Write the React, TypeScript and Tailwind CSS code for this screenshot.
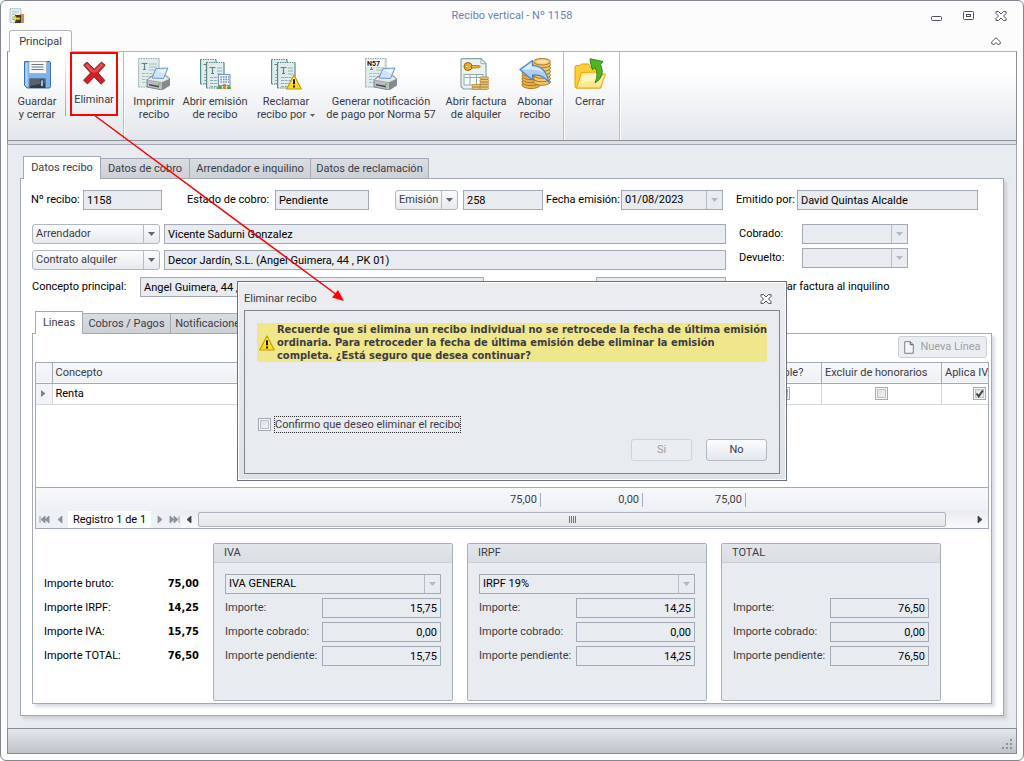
import React from "react";

type Option = { label: string; width: string };

function Caret({ className = "fill-[#5f6672]" }: { className?: string }) {
  return (
    <svg viewBox="0 0 7 4" className={`h-1 w-[7px] ${className}`} aria-hidden="true">
      <path d="M0 0h7L3.5 4z" />
    </svg>
  );
}

function TextField({
  label,
  value,
  labelWidth = "",
  width = "",
  muted = false,
  hiddenLabel = false,
  right = false,
}: {
  label: string;
  value: string;
  labelWidth?: string;
  width?: string;
  muted?: boolean;
  hiddenLabel?: boolean;
  right?: boolean;
}) {
  const id = React.useId();
  return (
    <>
      {!hiddenLabel && (
        <label htmlFor={id} className={`shrink-0 whitespace-nowrap ${labelWidth} ${muted ? "text-[#3b3b45]" : ""}`}>
          {label}
        </label>
      )}
      <input
        id={id}
        aria-label={hiddenLabel ? label : undefined}
        readOnly
        defaultValue={value}
        className={`h-5 min-w-0 border border-[#a3aab6] bg-[#e8ebf0] px-[3px] outline-none ${width} ${right ? "text-right" : ""}`}
      />
    </>
  );
}

function Combo({
  label,
  value,
  labelWidth = "",
  width = "",
  hiddenLabel = false,
}: {
  label: string;
  value: string;
  labelWidth?: string;
  width?: string;
  hiddenLabel?: boolean;
}) {
  const id = React.useId();
  return (
    <>
      {!hiddenLabel && (
        <label htmlFor={id} className={`shrink-0 whitespace-nowrap ${labelWidth}`}>
          {label}
        </label>
      )}
      <div className={`relative shrink-0 ${width}`}>
        <select
          id={id}
          aria-label={hiddenLabel ? label : undefined}
          disabled
          className="block h-5 w-full appearance-none border border-[#a3aab6] bg-[#e8ebf0] pr-5 pl-[3px] text-black opacity-100"
        >
          <option>{value}</option>
        </select>
        <span className="pointer-events-none absolute top-px right-px bottom-px flex w-4 items-center justify-center border-l border-[#b6bbc5]">
          <Caret className="fill-[#b3b8c0]" />
        </span>
      </div>
    </>
  );
}

function DropButton({ value, width }: { value: string; width: string }) {
  return (
    <div className={`relative shrink-0 ${width}`}>
      <select
        aria-label={value}
        className="block h-5 w-full appearance-none rounded-[3px] border border-[#b2b7c0] bg-linear-to-b from-[#fbfcfd] to-[#e6e9ee] pr-4 pl-[3px] text-[#3b3b45]"
      >
        <option>{value}</option>
      </select>
      <span className="pointer-events-none absolute top-px right-px bottom-px flex w-4 items-center justify-center border-l border-[#b6bbc5]">
        <Caret />
      </span>
    </div>
  );
}

function Check({ label, checked = false, id }: { label?: string; checked?: boolean; id?: string }) {
  return (
    <span className="relative inline-block size-[13px] shrink-0 align-top">
      <input
        type="checkbox"
        id={id}
        aria-label={label}
        defaultChecked={checked}
        className="peer block size-[13px] appearance-none border border-[#a3aab6] bg-linear-to-br from-[#dcdcdc] to-[#f6f6f6] shadow-[inset_0_0_0_1px_#f6f7f9,inset_0_0_0_2px_#bdbfc4]"
      />
      <svg
        viewBox="0 0 13 13"
        className="pointer-events-none absolute inset-0 hidden size-[13px] peer-checked:block"
        aria-hidden="true"
      >
        <path d="M3.500 6.500l2.200 2.800L9.800 3.500" fill="none" stroke="#3b3b3f" strokeWidth="1.900" />
      </svg>
    </span>
  );
}

function Tabs({ items }: { items: Option[] }) {
  return (
    <div role="tablist" className="relative z-10 -mb-px flex items-end">
      {items.map((t, i) =>
        i === 0 ? (
          <button
            key={t.label}
            role="tab"
            aria-selected
            className={`h-[23px] border border-b-0 border-[#a3aab6] bg-white text-[#3b3b45] ${t.width}`}
          >
            {t.label}
          </button>
        ) : (
          <button
            key={t.label}
            role="tab"
            className={`h-[21px] border border-l-0 border-[#a3aab6] bg-linear-to-b from-[#d9dce0] to-[#cdd1d6] whitespace-nowrap text-[#3b3b45] ${t.width}`}
          >
            {t.label}
          </button>
        ),
      )}
    </div>
  );
}

/* Ribbon icons, all drawn on a 32 x 32 grid */

function Sheet({ x = 0, y = 0, w = 21, h = 29, dark = false }: { x?: number; y?: number; w?: number; h?: number; dark?: boolean }) {
  const edge = dark ? "#4f8583" : "#8fa9a8";
  const line = dark ? "#86b3b0" : "#a3bdbb";
  return (
    <g transform={`translate(${x} ${y})`}>
      <rect x="0.5" y="0.5" width={w} height={h} fill="#e0eceb" />
      <path d={`M.5 .5H${w}M.5 ${h}H${w}`} stroke={edge} strokeWidth="1.2" strokeDasharray="1.4 1" />
      <path d={`M.6 .5V${h}M${w} .5V${h}`} stroke={edge} strokeWidth={dark ? 1.1 : 0.7} />
      <path d="M3.500 5.500h6M6.500 5.500v6M5 11.500h3" stroke="#5f8684" strokeWidth="1.2" />
      <path d={`M11 6H${w - 2}M11 9H${w - 2}M11 12H${w - 2}`} stroke={line} strokeWidth="1.200" />
      <path
        d={`M4 15.500H${w - 2}M4 18.500H${w - 2}M4 21.500H${w - 2}M4 24.500H${w - 2}`}
        stroke={line}
        strokeWidth="1.200"
        strokeDasharray="3 0.700"
      />
    </g>
  );
}

function Printer() {
  return (
    <g>
      <path d="M9 22l6-5h12l5 4v6l-8 5-15-3z" fill="#b9bdc2" stroke="#6d7278" strokeWidth="0.8" />
      <path d="M9 22l15 2.500 8-3.500-5-3.500H15z" fill="#e6e8ea" stroke="#8b9096" strokeWidth="0.6" />
      <path d="M18 10.500l12-.5-4.500 10.500L14 20z" fill="#cfe4fb" stroke="#5f8fd0" strokeWidth="0.9" />
      <path d="M19 12l9-.4-2 4z" fill="#f4f9ff" />
      <path d="M24 24.500l8-3.500v6l-8 5z" fill="#85898f" />
      <path d="M11 26l10 1.800v1.800l-10-2z" fill="#4d5157" />
      <rect x="20" y="25.500" width="2.200" height="1.500" fill="#5ad13a" />
    </g>
  );
}

function Warning() {
  return (
    <g transform="translate(16 16)">
      <path d="M8 1L15.300 15H.7z" fill="#ffd91f" stroke="#c39a08" strokeWidth="1.200" strokeLinejoin="round" />
      <path d="M8 2.800L11 9H5z" fill="#fff07a" />
      <path d="M8 5.200v5M8 11.500v2" stroke="#111" strokeWidth="1.900" />
    </g>
  );
}

function SaveIcon() {
  return (
    <svg viewBox="0 0 32 32" className="size-8" aria-hidden="true">
      <path d="M3.500 3.500h24.500q1.500 0 1.500 1.500v23.500q0 1.500-1.500 1.500H6l-2.500-2.500z" fill="#7fb2ea" stroke="#3c6fae" />
      <path d="M4.500 5v22l2 2V5z" fill="#b5d6f7" />
      <rect x="8" y="3.500" width="17.500" height="12" fill="#f6f7f9" stroke="#8aa4c4" strokeWidth="0.600" />
      <path d="M10.500 6.500h12M10.500 9h12M10.500 11.500h12" stroke="#70757c" />
      <rect x="8.500" y="20.500" width="16" height="9.500" fill="#353a42" />
      <path d="M9 21h15v4L9 28z" fill="#5a616b" />
      <rect x="19.500" y="22" width="3" height="6.500" fill="#8fbcf0" stroke="#20242b" strokeWidth="0.600" />
    </svg>
  );
}

function DeleteIcon() {
  return (
    <svg viewBox="0 0 32 32" className="size-8" aria-hidden="true">
      <path
        d="M5.500 8L9 5l7.200 7.200L23.500 5l3.700 3.200L20 16l7 7.500-4 3.700-6.800-7.200L9.500 27l-4-3.700 7-7.300z"
        fill="#cf1f27"
        stroke="#94191c"
        strokeWidth="0.900"
        strokeLinejoin="round"
      />
      <path d="M6.800 8.200L9 6.200l7.200 7.500 7.200-7.500 2.500 2.100-6.800 6.500q-3.200 1.200-6.200 0z" fill="#e8645f" opacity="0.700" />
    </svg>
  );
}

function PrintIcon() {
  return (
    <svg viewBox="0 0 32 32" className="size-8" aria-hidden="true">
      <Sheet />
      <Printer />
    </svg>
  );
}

function EmissionIcon() {
  return (
    <svg viewBox="0 0 32 32" className="size-8" aria-hidden="true">
      <Sheet x={1} y={1} w={16} h={25} dark />
      <Sheet x={7} y={4} w={18} h={26} dark />
      <rect x="19.500" y="16.500" width="11.500" height="11" fill="#e8f0fb" stroke="#7a94bd" />
      <path d="M21.500 19h8.500M21.500 21.500h8.500M21.500 24h8.500" stroke="#6f8dbd" strokeWidth="1.500" strokeDasharray="1.500 1" />
      <rect x="24" y="26" width="3" height="5" fill="#e08030" />
      <path d="M18 31q1-4 3.500-3 1 .5 1.500 3zM27.500 31q.5-3 2.500-3t2 3z" fill="#5a9e34" />
    </svg>
  );
}

function ClaimIcon() {
  return (
    <svg viewBox="0 0 32 32" className="size-8" aria-hidden="true">
      <Sheet x={1} y={1} w={16} h={25} dark />
      <Sheet x={7} y={4} w={18} h={26} dark />
      <Warning />
    </svg>
  );
}

function NormIcon() {
  return (
    <svg viewBox="0 0 32 32" className="size-8" aria-hidden="true">
      <Sheet />
      <rect x="1" y="2" width="18" height="7" fill="#fbfdfd" />
      <text x="2" y="8" fontSize="7" fontWeight="700" fill="#111">
        N57
      </text>
      <Printer />
    </svg>
  );
}

function InvoiceIcon() {
  return (
    <svg viewBox="0 0 32 32" className="size-8" aria-hidden="true">
      <path d="M2 .7h19l5 5V31H3.500L1 28.500V2z" fill="#e9f1f1" stroke="#8aa3a5" strokeWidth="1.200" />
      <path d="M21 .7v5h5z" fill="#fff" stroke="#8aa3a5" strokeWidth="0.900" />
      <rect x="4" y="16.500" width="19" height="10.500" fill="#f8fbfb" stroke="#93adaf" />
      <path d="M4 19.500h19M10 16.500V27M16.500 16.500V27" stroke="#93adaf" />
      <circle cx="8" cy="8.500" r="4" fill="#f0b429" stroke="#94630a" />
      <circle cx="6.800" cy="8.500" r="1.300" fill="#fff" stroke="#94630a" strokeWidth="0.600" />
      <path d="M11.500 7.500h7.500l1.500 1.200-2 1.300-1.500-.8-1.200 1.300-1.300-1-1.500.8h-1.500z" fill="#f0b429" stroke="#94630a" strokeWidth="0.700" />
      {[29, 26.5, 24, 21.5, 19].map((y) => (
        <rect key={y} x="20" y={y} width="8.500" height="2.300" rx="1" fill="#efc873" stroke="#a9782a" strokeWidth="0.700" />
      ))}
      {[29, 26.5].map((y) => (
        <rect key={y} x="12" y={y} width="8" height="2.300" rx="1" fill="#efc873" stroke="#a9782a" strokeWidth="0.700" />
      ))}
    </svg>
  );
}

function RefundIcon() {
  return (
    <svg viewBox="0 0 32 32" className="size-8" aria-hidden="true">
      {[27, 24, 21, 18, 15].map((y) => (
        <ellipse key={y} cx="12" cy={y} rx="9" ry="3.600" fill="#eab04a" stroke="#9a6414" strokeWidth="0.800" />
      ))}
      {[24, 20.5, 17, 13.5, 10, 6.5, 3.7].map((y) => (
        <ellipse key={y} cx="23" cy={y} rx="8.500" ry="3.300" fill="#f3c566" stroke="#9a6414" strokeWidth="0.800" />
      ))}
      <ellipse cx="23" cy="3.700" rx="5.500" ry="1.800" fill="#fbe3a4" />
      <path
        d="M.8 11.500L13.500 2.500v5q13 0 16.500 17-6-8.500-16.500-7.500v5z"
        fill="#a9d0f7"
        stroke="#4b82c4"
        strokeWidth="1.100"
        strokeLinejoin="round"
      />
      <path d="M3 11.500l9.500-6.700v4q8 .2 12.500 6-5.500-3.500-12.500-3.300z" fill="#dcedfd" />
    </svg>
  );
}

function CloseFolderIcon() {
  return (
    <svg viewBox="0 0 32 32" className="size-8" aria-hidden="true">
      <path d="M1 9q0-1.500 1.500-1.500h3L7.500 6h7l2 3.500H27V30H2.500Q1 30 1 28.500z" fill="#ffcf3a" stroke="#e39a0c" />
      <path d="M7.500 14.500l14-.5 3 2.500 7-.5-5 13.500q-.3.500-1 .5H2.500z" fill="#ffe98a" stroke="#e9a515" />
      <path d="M9 16.500l12-.5 3 2.500 5-.2-1.500 4q-10 0-20.500 3z" fill="#fff5bf" />
      <path
        d="M16.500 5L16 .8l13 2.700-2.500 3q5.500 12-5.500 18.500 4-9 0-15.500l-2.500 2.500z"
        fill="#4fb81e"
        stroke="#2a7a10"
        strokeWidth="0.900"
      />
    </svg>
  );
}

function RibbonButton({
  lines,
  icon,
  width,
  caret = false,
  ring = false,
}: {
  lines: string[];
  icon: React.ReactNode;
  width: string;
  caret?: boolean;
  ring?: boolean;
}) {
  return (
    <button
      className={`flex shrink-0 flex-col items-center leading-[13px] text-[#3b3b45] ${width} ${
        ring ? "h-16 gap-1 border-2 border-[#fb0207] pt-[3px]" : "h-20 gap-[5px] pt-1.5"
      }`}
    >
      {icon}
      <span className="whitespace-nowrap">
        {lines.map((l, i) => (
          <span key={l} className="block">
            {l}
            {caret && i === lines.length - 1 && (
              <svg viewBox="0 0 5 3" className="ml-1 inline h-[3px] w-[5px] fill-[#5f6672] align-middle" aria-hidden="true">
                <path d="M0 0h5L2.500 3z" />
              </svg>
            )}
          </span>
        ))}
      </span>
    </button>
  );
}

function GroupSeparator() {
  return <div className="w-0.5 self-stretch border-l border-[#b9bcc3] bg-white" />;
}

function CrossIcon() {
  return (
    <svg viewBox="0 0 12 10" className="h-2.5 w-3" aria-hidden="true">
      <path
        d="M1 .6h2.600L6 3 8.400.6H11v1.900L8.500 5 11 7.500v1.900H8.400L6 7 3.600 9.400H1V7.500L3.500 5 1 2.500z"
        fill="#fff"
        stroke="#4a4f59"
      />
    </svg>
  );
}

function Group({
  title,
  combo,
  values,
  width,
  inputWidth,
}: {
  title: string;
  combo?: string;
  values: string[];
  width: string;
  inputWidth: string;
}) {
  const labels = ["Importe:", "Importe cobrado:", "Importe pendiente:"];
  return (
    <section className={`h-[158px] shrink-0 rounded-[2px] border border-[#a9afba] bg-[#e8ebf0] ${width}`}>
      <h3 className="flex h-[19px] items-center border-b border-[#c9ced5] bg-linear-to-b from-[#e2e5e9] to-[#dadee3] pl-2.5 text-[#3b3b45]">
        {title}
      </h3>
      <div className="flex flex-col gap-1 px-[11px] pt-[11px]">
        <div className="flex h-5">{combo && <Combo label={title} hiddenLabel value={combo} width="w-full" />}</div>
        {labels.map((l, i) => (
          <div key={l} className="flex items-center justify-between">
            <TextField label={l} value={values[i]} width={inputWidth} muted right />
          </div>
        ))}
      </div>
    </section>
  );
}

const navPaths = {
  first: "M1 1v7M6 1v7L2 4.500zM10 1v7L6 4.500z",
  prev: "M7 1v7L3 4.500z",
  next: "M4 1v7l4-3.500z",
  last: "M1 1v7l4-3.500zM5 1v7l4-3.500zM10 1v7",
};

function NavButton({ label, d, dark = false, width }: { label: string; d: string; dark?: boolean; width: string }) {
  return (
    <button aria-label={label} className={`flex h-full shrink-0 items-center justify-center ${width}`}>
      <svg
        viewBox="0 0 11 9"
        className={`h-[9px] w-[11px] ${dark ? "fill-[#3d4149] stroke-[#3d4149]" : "fill-[#8b919b] stroke-[#8b919b]"}`}
        strokeWidth="0.8"
        aria-hidden="true"
      >
        <path d={d} />
      </svg>
    </button>
  );
}

function Dialog() {
  return (
    <div
      role="dialog"
      aria-labelledby="dialog-title"
      className="absolute top-[280px] left-[236px] z-20 w-[550px] border border-[#6b707a] bg-linear-to-b from-[#ebedf0] to-[#e0e3e6] px-1.5 pb-1.5 text-[#3b3b45] shadow-[inset_0_0_0_1px_#fff]"
    >
      <div className="flex h-7 items-center justify-between pt-1.5 pr-2">
        <h2 id="dialog-title">Eliminar recibo</h2>
        <button aria-label="Cerrar">
          <CrossIcon />
        </button>
      </div>
      <div className="flex h-[164px] flex-col justify-between border border-[#7f848d] bg-[#e8ebf0] px-3 pt-3 pb-3">
        <div className="flex items-center bg-[#f0e68c] font-['DejaVu_Sans_Condensed','DejaVu_Sans',sans-serif] leading-[13px] font-bold">
          <svg viewBox="16 16 16 16" className="ml-0.5 size-4 shrink-0" aria-hidden="true">
            <Warning />
          </svg>
          <p className="pl-0.5 whitespace-nowrap">
            Recuerde que si elimina un recibo individual no se retrocede la fecha de última emisión
            <br />
            ordinaria. Para retroceder la fecha de última emisión debe eliminar la emisión
            <br />
            completa. ¿Está seguro que desea continuar?
          </p>
        </div>
        <div>
          <div className="flex items-center gap-[3px] pl-px">
            <Check id="confirm" />
            <label htmlFor="confirm" className="h-[17px] border border-dotted border-[#2b2b2b] leading-[15px]">
              Confirmo que deseo eliminar el recibo
            </label>
          </div>
          <div className="mt-1.5 flex justify-end gap-3.5">
            <button
              disabled
              className="h-[22px] w-[61px] rounded-[3px] border border-[#cfd3d9] bg-[#ebeef1] text-[#9b9fa6]"
            >
              Si
            </button>
            <button className="h-[22px] w-[61px] rounded-[3px] border border-[#b2b7c0] bg-linear-to-b from-[#fbfcfd] to-[#e4e8ed]">
              No
            </button>
          </div>
        </div>
      </div>
    </div>
  );
}

export default function App() {
  const totals = [
    ["Importe bruto:", "75,00"],
    ["Importe IRPF:", "14,25"],
    ["Importe IVA:", "15,75"],
    ["Importe TOTAL:", "76,50"],
  ];

  return (
    <div className="relative flex min-h-screen flex-col rounded-[6px] border border-[#83868f] bg-[#fcfcfc] px-1.5 pb-1.5 font-[Roboto,'DejaVu_Sans',sans-serif] text-[11px] leading-[14px] text-black">
      <header className="flex h-[29px] items-center justify-between pr-2.5 pl-0.5">
        <div className="flex w-[104px]">
          <svg viewBox="0 0 16 16" className="size-4" aria-hidden="true">
            <rect x="1" y="0.700" width="11" height="14" fill="#e3eeec" stroke="#8fb0ae" strokeDasharray="1.300 0.800" />
            <path d="M3 4h7M3 6.500h4M3 9h3M3 11.500h4" stroke="#a9c3c1" />
            <rect x="11" y="6" width="4" height="9" fill="#c99252" />
            <rect x="6" y="7" width="6" height="8" fill="#43352a" />
            <path d="M4 10.500l3-3v2h4v2.200H7v1.800z" fill="#f5e427" stroke="#6c7a10" strokeWidth="0.500" />
          </svg>
        </div>
        <h1 className="text-[#6b82b0]">Recibo vertical - Nº 1158</h1>
        <div className="flex w-24 items-center justify-end gap-5">
          <button aria-label="Minimizar">
            <svg viewBox="0 0 12 10" className="h-2.5 w-3" aria-hidden="true">
              <rect x="0.500" y="5.500" width="10" height="4" rx="1" fill="#fff" stroke="#4a4f59" />
            </svg>
          </button>
          <button aria-label="Maximizar">
            <svg viewBox="0 0 12 10" className="h-2.5 w-3" aria-hidden="true">
              <rect x="0.500" y="0.500" width="10" height="8" rx="1" fill="#fff" stroke="#4a4f59" />
              <rect x="3.500" y="3.500" width="4" height="2" fill="#fff" stroke="#4a4f59" />
            </svg>
          </button>
          <button aria-label="Cerrar ventana">
            <CrossIcon />
          </button>
        </div>
      </header>

      <div className="relative z-10 -mb-px flex h-[22px] items-end justify-between pr-4 pl-0.5">
        <button className="h-[22px] w-[63px] rounded-t-[3px] border border-b-0 border-[#b0b3ba] bg-white text-[#3b3b45]">
          Principal
        </button>
        <button aria-label="Contraer la cinta" className="self-center">
          <svg viewBox="0 0 10 8" className="h-2 w-2.5" aria-hidden="true">
            <path d="M5 .7l4.300 4.200v1.600L8 7.300H6.800L5 5.600 3.200 7.300H2L.7 6.500V4.900z" fill="#fff" stroke="#4a4f59" />
          </svg>
        </button>
      </div>

      <div className="flex h-[90px] overflow-hidden border border-[#8b8f98] border-t-[#b0b3ba] bg-linear-to-b from-white from-20% to-[#e3e6eb]">
        <div className="flex pr-[5px] pl-px">
          <RibbonButton lines={["Guardar", "y cerrar"]} icon={<SaveIcon />} width="w-14" />
          <div className="mr-1 h-16 w-px bg-linear-to-b from-transparent to-[#9fa3ab]" />
          <RibbonButton lines={["Eliminar"]} icon={<DeleteIcon />} width="w-12" ring />
        </div>
        <GroupSeparator />
        <div className="flex px-1">
          <RibbonButton lines={["Imprimir", "recibo"]} icon={<PrintIcon />} width="w-[50px]" />
          <RibbonButton lines={["Abrir emisión", "de recibo"]} icon={<EmissionIcon />} width="w-[72px]" />
          <RibbonButton lines={["Reclamar", "recibo por"]} icon={<ClaimIcon />} width="w-[70px]" caret />
          <RibbonButton
            lines={["Generar notificación", "de pago por Norma 57"]}
            icon={<NormIcon />}
            width="w-[120px]"
          />
          <RibbonButton lines={["Abrir factura", "de alquiler"]} icon={<InvoiceIcon />} width="w-[70px]" />
          <RibbonButton lines={["Abonar", "recibo"]} icon={<RefundIcon />} width="w-12" />
        </div>
        <GroupSeparator />
        <div className="flex pr-1">
          <RibbonButton lines={["Cerrar"]} icon={<CloseFolderIcon />} width="w-[50px]" />
        </div>
        <GroupSeparator />
      </div>

      <div className="h-[3px] border-x border-[#8b8f98] bg-[#dcdfe5]" />

      <main className="flex flex-1 flex-col border border-b-0 border-[#a3aab6] bg-[#e8ebf0] px-3 pt-[11px] pb-3">
        <div className="pl-[3px]">
          <Tabs
            items={[
              { label: "Datos recibo", width: "w-[78px]" },
              { label: "Datos de cobro", width: "w-[89px]" },
              { label: "Arrendador e inquilino", width: "w-[121px]" },
              { label: "Datos de reclamación", width: "w-[118px]" },
            ]}
          />
        </div>

        <section className="flex flex-1 flex-col border border-[#a3aab6] bg-white pt-[11px] pb-[11px] shadow-[3px_3px_3px_#cdd1d7]">
          <div className="flex h-5 items-center pr-[25px] pl-2.5">
            <TextField label="Nº recibo:" value="1158" labelWidth="w-[52px]" width="w-[79px]" />
            <div className="ml-[25px] flex items-center">
              <TextField label="Estado de cobro:" value="Pendiente" labelWidth="w-[88px]" width="w-[94px]" />
            </div>
            <div className="ml-[26px] flex items-center gap-[5px]">
              <DropButton value="Emisión" width="w-[63px]" />
              <TextField label="Número de emisión" hiddenLabel value="258" width="w-20" />
            </div>
            <div className="ml-[3px] flex items-center">
              <Combo label="Fecha emisión:" value="01/08/2023" labelWidth="w-[75px]" width="w-[102px]" />
            </div>
            <div className="ml-[13px] flex flex-1 items-center">
              <TextField label="Emitido por:" value="David Quintas Alcalde" labelWidth="w-[61px]" width="flex-1" />
            </div>
          </div>

          <div className="mt-3.5 flex pl-[11px]">
            <div className="flex flex-1 flex-col gap-1.5">
              <div className="flex items-center gap-1">
                <DropButton value="Arrendador" width="w-32" />
                <TextField label="Arrendador" hiddenLabel value="Vicente Sadurni Gonzalez" width="flex-1" />
              </div>
              <div className="flex items-center gap-1">
                <DropButton value="Contrato alquiler" width="w-32" />
                <TextField
                  label="Contrato alquiler"
                  hiddenLabel
                  value="Decor Jardín, S.L. (Angel Guimera, 44 , PK 01)"
                  width="flex-1"
                />
              </div>
              <div className="mt-px flex items-center">
                <TextField label="Concepto principal:" value="Angel Guimera, 44 , PK 01" labelWidth="w-[108px]" width="w-[344px]" />
                <div className="ml-auto flex">
                  <TextField label="Referencia" hiddenLabel value="" width="w-[130px]" />
                </div>
              </div>
            </div>
            <div className="flex w-[277px] flex-col gap-1 pl-[13px]">
              <div className="flex items-center">
                <Combo label="Cobrado:" value="" labelWidth="w-[63px]" width="w-[106px]" />
              </div>
              <div className="flex items-center">
                <Combo label="Devuelto:" value="" labelWidth="w-[63px]" width="w-[106px]" />
              </div>
              <div className="mt-2 flex items-center gap-1 pl-0.5">
                <Check id="invoice" />
                <label htmlFor="invoice">Generar factura al inquilino</label>
              </div>
            </div>
          </div>

          <div className="mt-3.5 flex flex-1 flex-col px-[11px]">
            <div className="pl-[3px]">
              <Tabs
                items={[
                  { label: "Lineas", width: "w-12" },
                  { label: "Cobros / Pagos", width: "w-[88px]" },
                  { label: "Notificaciones", width: "w-20" },
                ]}
              />
            </div>
            <div className="flex-1 border border-[#a3aab6] bg-white px-0.5 pt-0.5 pb-px shadow-[3px_3px_3px_#d9dce1]">
              <div className="flex justify-end pr-0.5 pb-1">
                <button
                  disabled
                  className="flex h-[22px] w-[89px] items-center justify-center gap-1.5 rounded-[3px] border border-[#ccd0d6] bg-[#ebeef1] whitespace-nowrap text-[#9b9fa6]"
                >
                  <svg viewBox="0 0 10 13" className="h-[13px] w-2.5" aria-hidden="true">
                    <path d="M.7.700h5.600L9.300 3.700v8.600H.7z" fill="#f4f4f4" stroke="#7c7f85" />
                    <path d="M6.300.700v3h3" fill="none" stroke="#55585e" />
                  </svg>
                  Nueva Línea
                </button>
              </div>

              <div className="overflow-hidden border border-[#a3aab6]">
                <div className="h-[124px]">
                  <table className="w-[calc(100%+30px)] table-fixed border-collapse text-[#3b3b45]">
                    <colgroup>
                      <col className="w-4" />
                      <col />
                      <col className="w-[102px]" />
                      <col className="w-[102px]" />
                      <col className="w-[103px]" />
                      <col className="w-[76px]" />
                      <col className="w-[120px]" />
                      <col className="w-[76px]" />
                    </colgroup>
                    <thead>
                      <tr className="h-5 border-b border-[#a3aab6] bg-linear-to-b from-[#f7f8fa] to-[#edf0f4] text-left [&>th]:border-r [&>th]:border-[#a3aab6] [&>th]:px-[3px] [&>th]:font-normal [&>th]:whitespace-nowrap">
                        <th />
                        <th>Concepto</th>
                        <th />
                        <th />
                        <th />
                        <th>Imputable?</th>
                        <th>Excluir de honorarios</th>
                        <th>Aplica IVA?</th>
                      </tr>
                    </thead>
                    <tbody>
                      <tr className="h-[21px] border-b border-[#d3d6db] [&>td]:border-r [&>td]:border-[#d3d6db] [&>td]:px-[3px]">
                        <td className="bg-[#f1f3f6]">
                          <svg viewBox="0 0 5 7" className="mx-auto h-[7px] w-[5px] fill-[#7d838e]" aria-hidden="true">
                            <path d="M0 0v7l4.500-3.500z" />
                          </svg>
                        </td>
                        <td className="text-black">Renta</td>
                        <td />
                        <td />
                        <td />
                        <td className="text-center">
                          <Check checked label="Imputable" />
                        </td>
                        <td className="text-center">
                          <Check label="Excluir de honorarios" />
                        </td>
                        <td className="text-center">
                          <Check checked label="Aplica IVA" />
                        </td>
                      </tr>
                    </tbody>
                  </table>
                </div>

                <div className="grid h-6 w-[calc(100%+30px)] grid-cols-[16px_1fr_102px_102px_103px_76px_120px_76px] items-center border-t border-[#a3aab6] bg-linear-to-b from-[#f7f8fa] to-[#edf0f4] text-right text-[#3b3b45]">
                  <span className="col-start-3 border-r border-[#a3aab6] pr-[3px]">75,00</span>
                  <span className="border-r border-[#a3aab6] pr-[3px]">0,00</span>
                  <span className="border-r border-[#a3aab6] pr-[3px]">75,00</span>
                </div>

                <div className="flex h-[17px] items-center bg-linear-to-b from-[#e9ebee] to-[#fbfbfc]">
                  <div className="flex h-full items-center bg-[#edf0f4]">
                    <NavButton label="Primero" d={navPaths.first} width="w-4" />
                    <NavButton label="Anterior" d={navPaths.prev} width="w-4" />
                    <span className="flex h-full w-[83px] items-center justify-center bg-white whitespace-nowrap">
                      Registro 1 de 1
                    </span>
                    <NavButton label="Siguiente" d={navPaths.next} width="w-4" />
                    <NavButton label="Último" d={navPaths.last} width="w-3.5" />
                  </div>
                  <NavButton label="Desplazar a la izquierda" d={navPaths.prev} dark width="w-[17px]" />
                  <div className="mr-[25px] flex h-[15px] flex-1 items-center justify-center gap-px rounded-[2px] border border-[#b0b4bc] bg-linear-to-b from-[#f0f1f2] to-[#e4e6e9]">
                    <span className="h-[7px] w-px bg-[#6d727b]" />
                    <span className="h-[7px] w-px bg-[#6d727b]" />
                    <span className="h-[7px] w-px bg-[#6d727b]" />
                    <span className="h-[7px] w-px bg-[#6d727b]" />
                  </div>
                  <NavButton label="Desplazar a la derecha" d={navPaths.next} dark width="w-[17px]" />
                </div>
              </div>

              <div className="mt-3.5 flex gap-3.5 pl-[9px]">
                <dl className="mt-[34px] flex w-[155px] flex-col gap-2.5">
                  {totals.map(([k, v]) => (
                    <div key={k} className="flex justify-between">
                      <dt>{k}</dt>
                      <dd className="font-['DejaVu_Sans_Condensed','DejaVu_Sans',sans-serif] font-bold">{v}</dd>
                    </div>
                  ))}
                </dl>
                <div className="flex gap-3.5">
                  <Group
                    title="IVA"
                    combo="IVA GENERAL"
                    values={["15,75", "0,00", "15,75"]}
                    width="w-60"
                    inputWidth="w-[119px]"
                  />
                  <Group
                    title="IRPF"
                    combo="IRPF 19%"
                    values={["14,25", "0,00", "14,25"]}
                    width="w-60"
                    inputWidth="w-[119px]"
                  />
                  <Group title="TOTAL" values={["76,50", "0,00", "76,50"]} width="w-[220px]" inputWidth="w-[99px]" />
                </div>
              </div>
            </div>
          </div>
        </section>
      </main>

      <footer className="flex h-[26px] items-end justify-end border border-[#868b95] bg-linear-to-b from-[#e3e6ea] to-[#bfc3c9] p-[3px]">
        <svg viewBox="0 0 12 12" className="size-3 fill-[#8d929b]" aria-hidden="true">
          <path d="M9 1h2v2H9zM9 5h2v2H9zM5 5h2v2H5zM9 9h2v2H9zM5 9h2v2H5zM1 9h2v2H1z" />
        </svg>
      </footer>

      <Dialog />

      <svg
        viewBox="0 0 252 188"
        className="pointer-events-none absolute top-[113px] left-[92px] z-30 h-[188px] w-[252px]"
        aria-hidden="true"
      >
        <path d="M1 1L244 181" stroke="#fb0207" strokeWidth="1.500" />
        <path d="M251 187l-12-3.500 6-7.500z" fill="#fb0207" />
      </svg>
    </div>
  );
}
